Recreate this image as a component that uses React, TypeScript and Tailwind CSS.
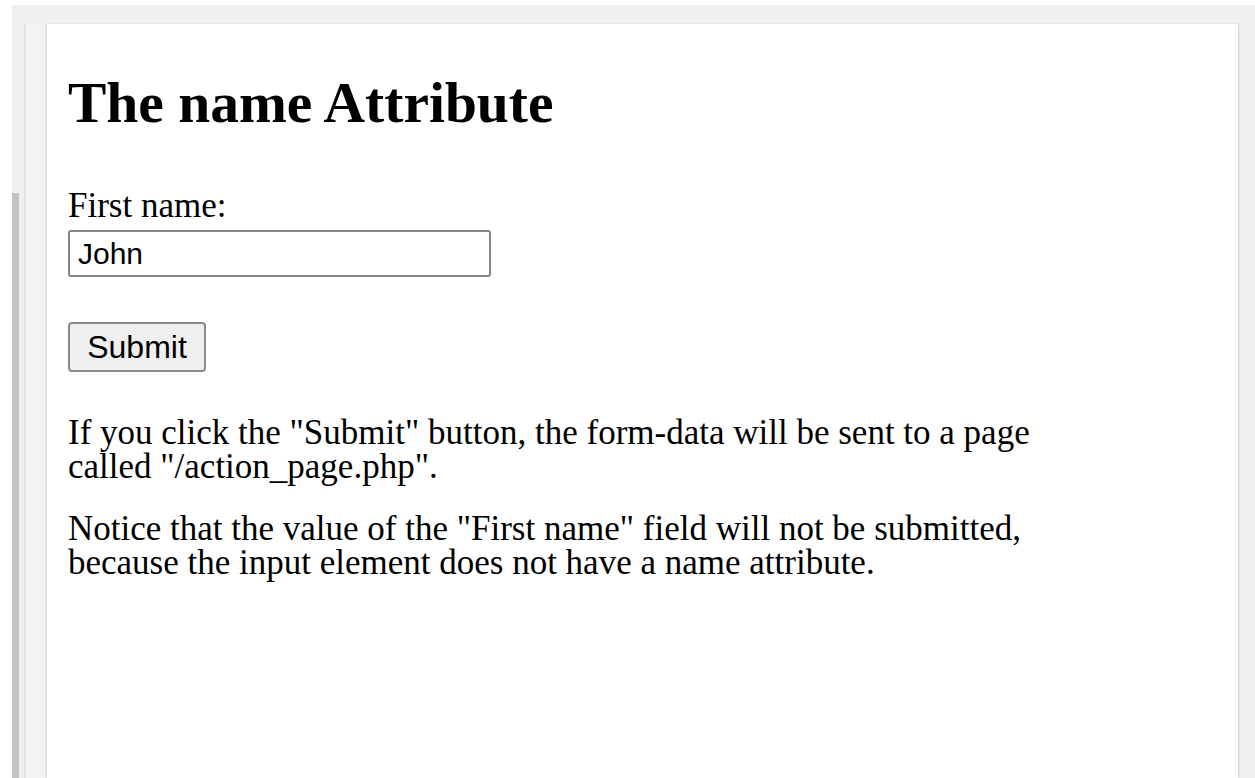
export default function App() {
  return (
    <div className="flex h-[778px] w-full overflow-hidden bg-white">
      <div className="w-[12px] bg-white" />
      <div className="flex flex-1 flex-col">
        <div className="h-[5px] bg-white" />
        <div className="flex flex-1 bg-[#f0f0f0] pt-[19px]">
          {/* left rail with scrollbar thumb */}
          <div className="flex w-[12px] flex-col">
            <div className="h-[169px]" />
            <div className="w-[7px] flex-1 bg-[#c4c4c4]" />
          </div>
          <div className="w-[2px] bg-[#e2e2e2]" />
          <div className="w-[19px] bg-[#f3f3f3]" />
          <div className="w-[2px] bg-[#e4e4e4]" />
          {/* result panel */}
          <div
            className="mr-[17px] flex-1 bg-white pl-[21px] pt-[46px] text-black shadow-[1px_0_2px_rgba(0,0,0,0.12)]"
            style={{ fontFamily: '"Liberation Serif", "Times New Roman", serif' }}
          >
            <h1 className="text-[57.5px] font-bold leading-[66px]">The name Attribute</h1>
            <form className="mt-[53px] text-[35px] leading-[34px]">
              <div>First name:</div>
              <input
                type="text"
                defaultValue="John"
                className="mt-[7px] h-[47px] w-[423px] rounded-[3px] border-2 border-[#858585] px-[8px] text-[30px] text-black"
                style={{ fontFamily: '"Liberation Sans", Arial, sans-serif' }}
              />
              <div className="mt-[45px] leading-none">
                <button
                  type="button"
                  className="h-[50px] w-[138px] rounded-[4px] border-2 border-[#8a8a8a] bg-[#efefef] text-[32px] text-black"
                  style={{ fontFamily: '"Liberation Sans", Arial, sans-serif' }}
                >
                  Submit
                </button>
              </div>
            </form>
            <p className="mt-[44px] text-[35px] leading-[34px]">
              If you click the "Submit" button, the form-data will be sent to a page
              <br />
              called "/action_page.php".
            </p>
            <p className="mt-[28px] text-[35px] leading-[34px]">
              Notice that the value of the "First name" field will not be submitted,
              <br />
              because the input element does not have a name attribute.
            </p>
          </div>
        </div>
      </div>
    </div>
  );
}
